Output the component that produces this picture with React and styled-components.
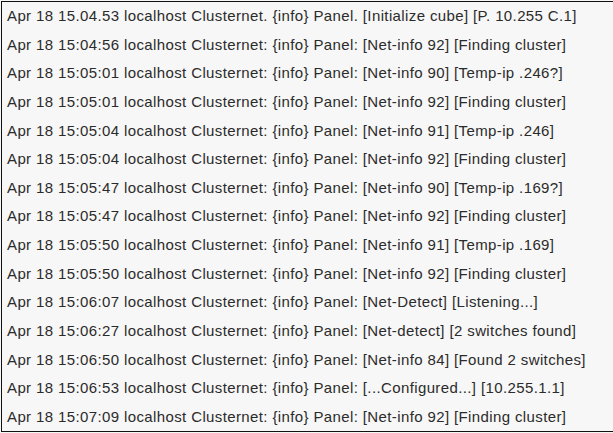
import React from "react";
import styled, { createGlobalStyle } from "styled-components";

const Global = createGlobalStyle`
  html, body { margin: 0; padding: 0; background: #f7f7f7; }
  body { width: 613px; height: 433px; overflow: hidden; }
`;

const Frame = styled.div`
  box-sizing: border-box;
  margin: 1px 0 0 1px;
  width: 612px;
  height: 431px;
  border-top: 1px solid #111;
  border-left: 1px solid #111;
  border-bottom: 1px solid #111;
  background: #f7f7f7;
  overflow: hidden;
`;

const List = styled.ul`
  list-style: none;
  margin: 0;
  padding: 0;
`;

const Row = styled.li`
  height: 28.64px;
  line-height: 28.64px;
  padding-left: 5px;
  white-space: nowrap;
  font-family: "Liberation Sans", Arial, sans-serif;
  font-size: 15px;
  letter-spacing: 0.38px;
  color: #2b2b2b;
`;

const lines = [
  "Apr 18 15.04.53 localhost Clusternet. {info} Panel. [Initialize cube] [P. 10.255 C.1]",
  "Apr 18 15:04:56 localhost Clusternet: {info} Panel: [Net-info 92] [Finding cluster]",
  "Apr 18 15:05:01 localhost Clusternet: {info} Panel: [Net-info 90] [Temp-ip .246?]",
  "Apr 18 15:05:01 localhost Clusternet: {info} Panel: [Net-info 92] [Finding cluster]",
  "Apr 18 15:05:04 localhost Clusternet: {info} Panel: [Net-info 91] [Temp-ip .246]",
  "Apr 18 15:05:04 localhost Clusternet: {info} Panel: [Net-info 92] [Finding cluster]",
  "Apr 18 15:05:47 localhost Clusternet: {info} Panel: [Net-info 90] [Temp-ip .169?]",
  "Apr 18 15:05:47 localhost Clusternet: {info} Panel: [Net-info 92] [Finding cluster]",
  "Apr 18 15:05:50 localhost Clusternet: {info} Panel: [Net-info 91] [Temp-ip .169]",
  "Apr 18 15:05:50 localhost Clusternet: {info} Panel: [Net-info 92] [Finding cluster]",
  "Apr 18 15:06:07 localhost Clusternet: {info} Panel: [Net-Detect] [Listening...]",
  "Apr 18 15:06:27 localhost Clusternet: {info} Panel: [Net-detect] [2 switches found]",
  "Apr 18 15:06:50 localhost Clusternet: {info} Panel: [Net-info 84] [Found 2 switches]",
  "Apr 18 15:06:53 localhost Clusternet: {info} Panel: [...Configured...] [10.255.1.1]",
  "Apr 18 15:07:09 localhost Clusternet: {info} Panel: [Net-info 92] [Finding cluster]",
];

export default function App() {
  return (
    <>
      <Global />
      <Frame>
        <List>
          {lines.map((l, i) => (
            <Row key={i}>{l}</Row>
          ))}
        </List>
      </Frame>
    </>
  );
}
